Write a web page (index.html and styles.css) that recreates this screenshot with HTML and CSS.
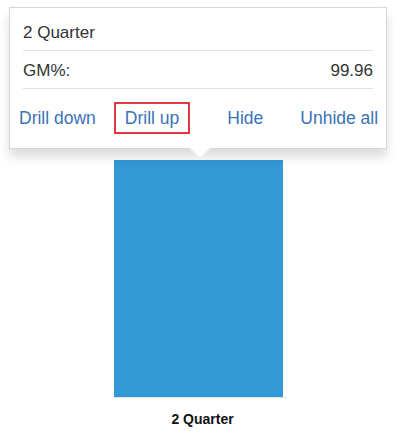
FILE: index.html
```html
<!DOCTYPE html>
<html>
<head>
<meta charset="utf-8">
<link rel="stylesheet" href="styles.css">
</head>
<body>
<div class="chart">
  <div class="plot">
    <div class="bar"></div>
  </div>
  <div class="axis"></div>
  <div class="xlabel">2 Quarter</div>

  <div class="tooltip">
    <div class="row title">2 Quarter</div>
    <div class="row measure"><span>GM%:</span><span>99.96</span></div>
    <div class="actions">
      <span class="link">Drill down</span>
      <span class="link selected">Drill up</span>
      <span class="link hide">Hide</span>
      <span class="link">Unhide all</span>
    </div>
    <div class="arrow"></div>
  </div>
</div>
</body>
</html>
```
FILE: styles.css
```css
* { box-sizing: border-box; }
html, body {
  margin: 0;
  padding: 0;
  background: #fff;
  font-family: "Liberation Sans", Arial, sans-serif;
}
.chart {
  position: relative;
  width: 403px;
  height: 435px;
  padding-top: 160px;
}
.plot {
  padding-left: 114px;
  height: 237px;
}
.bar {
  width: 169px;
  height: 237px;
  background: #3399d4;
}
.axis {
  margin-left: 113px;
  width: 174px;
  height: 1px;
  background: #e3e3e3;
}
.xlabel {
  text-align: center;
  font-size: 14px;
  font-weight: bold;
  color: #111;
  margin-top: 13px;
  padding-left: 2px;
}
.tooltip {
  position: absolute;
  left: 9px;
  top: 7px;
  width: 378px;
  height: 142px;
  background: #fff;
  border: 1px solid #d6d6d6;
  box-shadow: 0 8px 10px rgba(0, 0, 0, 0.14);
  padding: 0 13px;
  color: #333;
  font-size: 17px;
}
.row {
  border-bottom: 1px solid #e2e2e2;
  line-height: 18px;
}
.title {
  height: 43px;
  padding-top: 16px;
}
.measure {
  height: 38px;
  padding-top: 11px;
  display: flex;
  justify-content: space-between;
}
.actions {
  display: flex;
  align-items: center;
  gap: 18px;
  margin: 0 -5px 0 -4px;
  height: 59px;
  padding-bottom: 2px;
}
.link {
  color: #3b72b6;
  font-size: 17.5px;
  line-height: 20px;
  white-space: nowrap;
}
.selected {
  border: 2px solid #e0393e;
  padding: 4px 9px;
  margin-right: 19px;
}
.hide {
  margin-right: 19px;
}
.arrow {
  position: absolute;
  left: 182px;
  top: 132px;
  width: 16px;
  height: 16px;
  background: #fff;
  transform: rotate(45deg);
  border-right: 1px solid #e6e6e6;
  border-bottom: 1px solid #e6e6e6;
}
```
